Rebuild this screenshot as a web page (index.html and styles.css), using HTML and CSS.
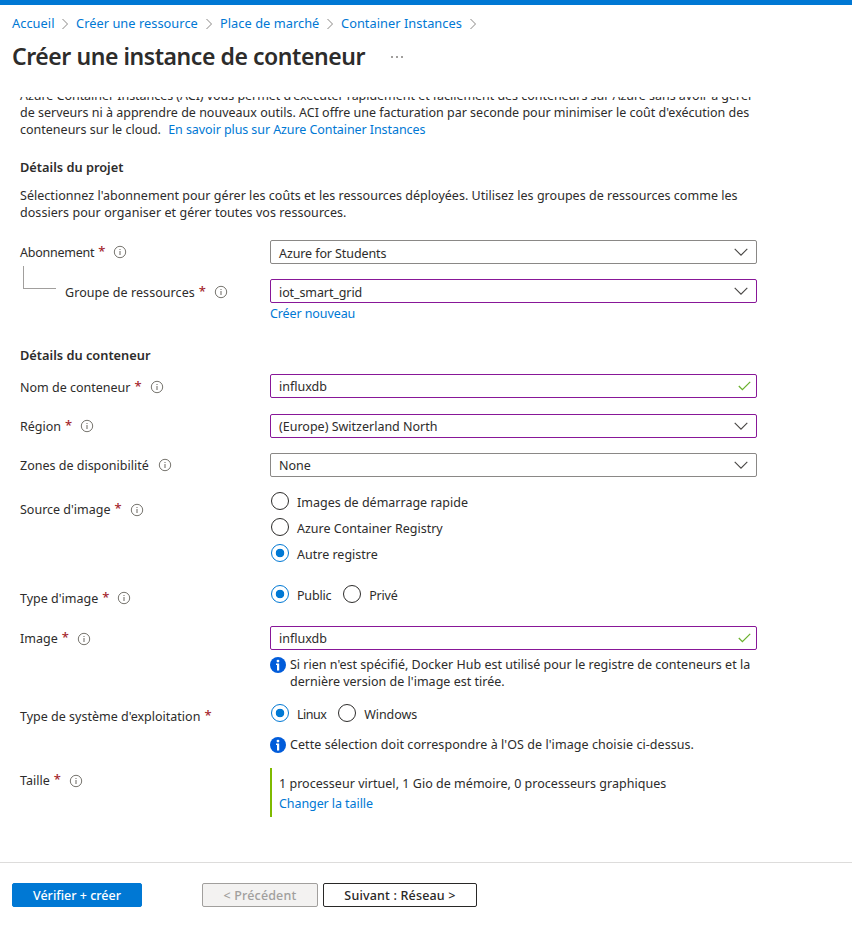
FILE: index.html
```html
<!DOCTYPE html>
<html lang="fr">
<head>
<meta charset="utf-8">
<title>Créer une instance de conteneur</title>
<link rel="stylesheet" href="styles.css">
</head>
<body>
<svg class="defs" aria-hidden="true">
  <symbol id="sep" viewBox="0 0 8 12"><path d="M1.5 1l5 5-5 5" fill="none" stroke="#8a8886" stroke-width="1"/></symbol>
  <symbol id="info" viewBox="0 0 14 14"><circle cx="7" cy="7" r="5.7" fill="none" stroke="#77756f" stroke-width="1"/><path d="M7 6v4M7 4v1.1" fill="none" stroke="#77756f" stroke-width="1.1"/></symbol>
  <symbol id="chev" viewBox="0 0 14 8"><path d="M.7 .8L7 7.1 13.3 .8" fill="none" stroke="#484644" stroke-width="1.1"/></symbol>
  <symbol id="check" viewBox="0 0 13 10"><path d="M.8 5l3.6 3.6L12.2 .9" fill="none" stroke="#6bb12f" stroke-width="1.3"/></symbol>
  <symbol id="note" viewBox="0 0 16 16"><circle cx="8" cy="8" r="8" fill="#015cda"/><circle cx="8" cy="4.1" r="1.4" fill="#fff"/><path d="M6 6.6h3.2v6.8H7V8H6z" fill="#fff"/></symbol>
</svg>
<div class="topbar"></div>
<nav class="crumbs">
  <a class="c1">Accueil</a><svg><use href="#sep"/></svg>
  <a class="c2">Créer une ressource</a><svg><use href="#sep"/></svg>
  <a class="c3">Place de marché</a><svg><use href="#sep"/></svg>
  <a class="c4">Container Instances</a><svg><use href="#sep"/></svg>
</nav>
<header class="title"><h1>Créer une instance de conteneur</h1><span class="more"><i></i><i></i><i></i></span></header>
<main>
  <p class="intro"><span class="l1">Azure Container Instances (ACI) vous permet d'exécuter rapidement et facilement des conteneurs sur Azure sans avoir à gérer</span><br>de serveurs ni à apprendre de nouveaux outils. ACI offre une facturation par seconde pour minimiser le coût d'exécution des<br>conteneurs sur le cloud. <a class="learn">En savoir plus sur Azure Container Instances</a></p>
  <h2 class="h-project">Détails du projet</h2>
  <p class="desc"><span class="d1">Sélectionnez l'abonnement pour gérer les coûts et les ressources déployées. Utilisez les groupes de ressources comme les</span><br><span class="d2">dossiers pour organiser et gérer toutes vos ressources.</span></p>

  <div class="row r-sub">
    <div class="label">Abonnement <b>*</b><svg><use href="#info"/></svg></div>
    <div class="box">Azure for Students<svg class="chev"><use href="#chev"/></svg></div>
  </div>
  <div class="row r-group">
    <div class="label"><span class="elbow"></span>Groupe de ressources <b>*</b><svg><use href="#info"/></svg></div>
    <div><div class="box edited">iot_smart_grid<svg class="chev"><use href="#chev"/></svg></div><a class="new">Créer nouveau</a></div>
  </div>
  <h2 class="h-container">Détails du conteneur</h2>
  <div class="row r-name">
    <div class="label">Nom de conteneur <b>*</b><svg><use href="#info"/></svg></div>
    <div class="box edited">influxdb<svg class="check"><use href="#check"/></svg></div>
  </div>
  <div class="row r-region">
    <div class="label">Région <b>*</b><svg><use href="#info"/></svg></div>
    <div class="box edited">(Europe) Switzerland North<svg class="chev"><use href="#chev"/></svg></div>
  </div>
  <div class="row r-zone">
    <div class="label">Zones de disponibilité<svg><use href="#info"/></svg></div>
    <div class="box">None<svg class="chev"><use href="#chev"/></svg></div>
  </div>
  <div class="row r-source">
    <div class="label">Source d'image <b>*</b><svg><use href="#info"/></svg></div>
    <div class="radios stacked">
      <div class="radio"><i></i><span>Images de démarrage rapide</span></div>
      <div class="radio"><i></i><span>Azure Container Registry</span></div>
      <div class="radio on"><i></i><span>Autre registre</span></div>
    </div>
  </div>
  <div class="row r-type">
    <div class="label">Type d'image <b>*</b><svg><use href="#info"/></svg></div>
    <div class="radios">
      <div class="radio on"><i></i><span>Public</span></div>
      <div class="radio"><i></i><span>Privé</span></div>
    </div>
  </div>
  <div class="row r-image">
    <div class="label">Image <b>*</b><svg><use href="#info"/></svg></div>
    <div><div class="box edited">influxdb<svg class="check"><use href="#check"/></svg></div>
      <div class="note"><svg><use href="#note"/></svg><p>Si rien n'est spécifié, Docker Hub est utilisé pour le registre de conteneurs et la<br>dernière version de l'image est tirée.</p></div></div>
  </div>
  <div class="row r-os">
    <div class="label">Type de système d'exploitation <b>*</b></div>
    <div>
      <div class="radios">
        <div class="radio on"><i></i><span>Linux</span></div>
        <div class="radio"><i></i><span>Windows</span></div>
      </div>
      <div class="note"><svg><use href="#note"/></svg><p>Cette sélection doit correspondre à l'OS de l'image choisie ci-dessus.</p></div>
    </div>
  </div>
  <div class="row r-size">
    <div class="label">Taille <b>*</b><svg><use href="#info"/></svg></div>
    <div class="size"><span>1 processeur virtuel, 1 Gio de mémoire, 0 processeurs graphiques</span><a>Changer la taille</a></div>
  </div>
</main>
<footer>
  <button class="primary">Vérifier + créer</button>
  <button class="prev" disabled>&lt; Précédent</button>
  <button class="next">Suivant : Réseau &gt;</button>
</footer>
</body>
</html>
```
FILE: styles.css
```css
* { box-sizing: border-box; }
body { margin: 0; width: 852px; height: 928px; overflow: hidden; background: #fff; color: #2d2c2b; font: 12.5px/17px "Noto Sans", "Segoe UI", sans-serif; }
.defs { display: none; }
h1, h2, p { margin: 0; }
a { color: #0078d4; }
.topbar { height: 5px; background: #0078d4; }

.crumbs { display: flex; align-items: center; height: 37px; padding-left: 12px; font-size: 12.8px; white-space: nowrap; }
.crumbs svg { width: 8px; height: 12px; margin: 1px 7px 0; flex: none; }
.crumbs a { flex: none; letter-spacing: .04px; }
.c1 { width: 42px; }
.c2 { width: 122px; }
.c3 { width: 99px; }
.c4 { width: 121px; }

.title { display: flex; align-items: center; height: 29px; padding-left: 12px; }
h1 { width: 379px; font-size: 23px; line-height: 29px; font-weight: 600; letter-spacing: -.44px; white-space: nowrap; }
.more { display: flex; gap: 3px; margin-top: 1px; }
.more i { width: 2px; height: 2px; background: #a19f9d; }

main { height: 765px; margin-top: 26px; padding-left: 20px; overflow: hidden; white-space: nowrap; }
.intro { height: 51px; margin-top: -10px; }
.l1 { letter-spacing: -.04px; }
.learn { margin-left: 4px; letter-spacing: -.08px; }
h2 { font-size: 12.8px; line-height: 20px; height: 20px; font-weight: 600; }
.h-project { margin-top: 19px; }
.desc { margin-top: 10px; height: 34px; }
.d1 { letter-spacing: .03px; }
.d2 { letter-spacing: .06px; }

.row { display: grid; grid-template-columns: 250px 487px; align-items: start; }
.label { display: flex; align-items: center; height: 24px; }
.label b { width: 6px; margin: -2px 0 0 4px; color: #a4262c; font-weight: 500; font-size: 13px; letter-spacing: 0; }
.label svg { width: 14px; height: 14px; margin-left: 9px; }
.box { display: flex; align-items: center; justify-content: space-between; height: 24px; padding: 0 8px; border: 1px solid #8a8886; border-radius: 2px; }
.edited { border-color: #881798; }
.r-sub .box, .r-group .box { padding-top: 2px; letter-spacing: -.1px; }
.r-sub .box svg, .r-group .box svg { margin-top: -2px; }
.chev { width: 14px; height: 8px; }
.check { width: 13px; height: 10px; margin-right: -3px; }

.r-sub { height: 39px; margin-top: 19px; }
.r-sub .label { letter-spacing: -.25px; }
.r-group { height: 66px; }
.r-group .label { height: 26px; letter-spacing: .07px; }
.elbow { width: 33px; height: 23px; margin: -29px 9px 0 3px; border: solid #a19f9d; border-width: 0 0 1px 1px; }
.new { display: block; margin-top: 2px; letter-spacing: -.1px; }
.h-container { margin-bottom: 9px; }
.r-name { height: 40px; }
.r-name .label { height: 26px; }
.r-region { height: 39px; }
.r-zone { height: 39px; }
.r-source { height: 93px; }
.r-source .label { height: 35px; }
.r-type { height: 41px; }
.r-type .label { height: 26px; }
.r-image { height: 78px; }
.r-image .label { height: 25px; }
.r-os { height: 64px; }
.r-os .label { height: 25px; }
.r-size .label { height: 25px; }

.radios { display: flex; gap: 12px; padding-left: 1px; }
.stacked { flex-direction: column; gap: 8px; }
.radio { display: flex; align-items: center; height: 18px; }
.radio i { width: 18px; height: 18px; margin-right: 8px; border: 1px solid #2d2c2b; border-radius: 50%; background: #fff; }
.radio span { margin-top: 3px; }
.r-type .radio span { letter-spacing: -.2px; }
.r-os .radio.on span { letter-spacing: -.5px; }
.r-os .radio span { letter-spacing: -.1px; }
.radio.on i { border-color: #0078d4; background: radial-gradient(circle, #0078d4 4px, #fff 4.6px); }

.note { display: flex; gap: 4px; margin-top: 6px; letter-spacing: .01px; }
.note svg { width: 16px; height: 16px; margin-top: 1px; flex: none; }
.r-os .note { height: 18px; margin-top: 14px; letter-spacing: .06px; }
.size { display: flex; flex-direction: column; gap: 3px; height: 49px; padding: 7px 0 0 7px; border-left: 2px solid #7fba00; letter-spacing: .03px; }
.size a { letter-spacing: -.08px; }

footer { display: flex; height: 66px; padding: 20px 12px; border-top: 1px solid #dddcdb; }
button { height: 24px; padding: 1px 0 0; border: 1px solid; border-radius: 2px; font: 500 12.5px "Noto Sans", sans-serif; line-height: 20px; }
.primary { width: 130px; margin-right: 60px; border-color: #0078d4; background: #0078d4; color: #fff; }
.prev { width: 116px; margin-right: 5px; border-color: #a19f9d; background: #f3f2f1; color: #a19f9d; letter-spacing: .15px; }
.next { width: 154px; border-color: #292827; background: #fff; color: #292827; letter-spacing: .18px; }
```
